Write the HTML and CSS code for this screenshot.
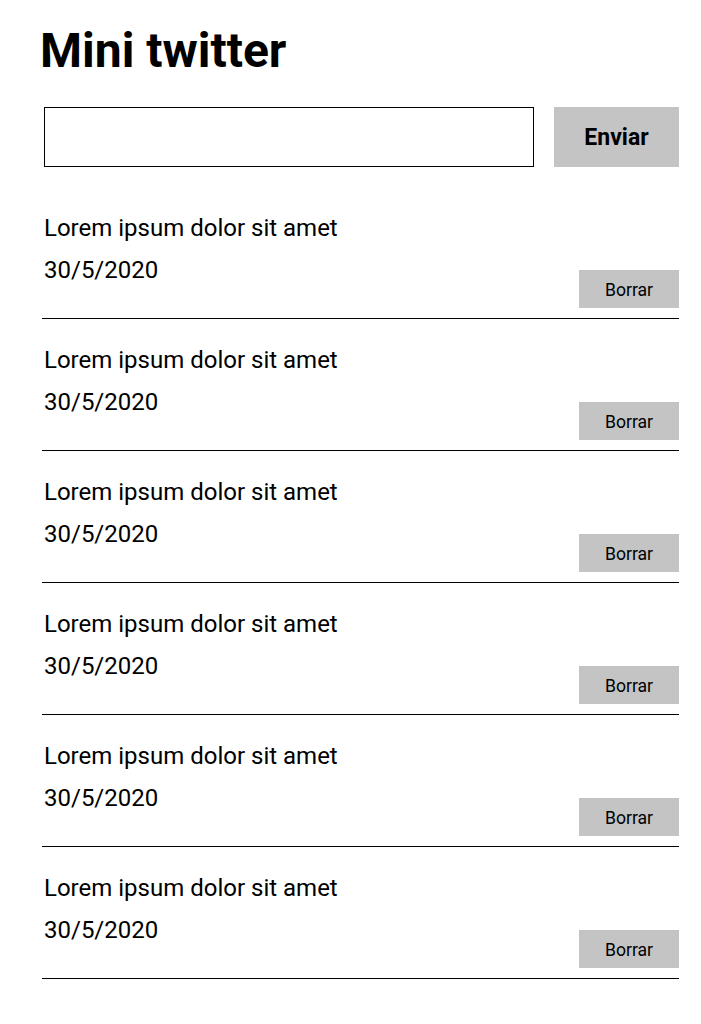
FILE: index.html
```html
<!DOCTYPE html>
<html lang="es">
<head>
<meta charset="utf-8">
<title>Mini twitter</title>
<link rel="stylesheet" href="styles.css">
</head>
<body>
<main class="app">
  <h1 class="title">Mini twitter</h1>
  <form class="composer">
    <input class="composer-input" type="text">
    <button class="composer-send" type="button">Enviar</button>
  </form>
  <ul class="tweets">
    <li class="tweet">
      <div class="tweet-body">
        <p class="tweet-text">Lorem ipsum dolor sit amet</p>
        <p class="tweet-date">30/5/2020</p>
      </div>
      <button class="tweet-delete" type="button">Borrar</button>
    </li>
    <li class="tweet">
      <div class="tweet-body">
        <p class="tweet-text">Lorem ipsum dolor sit amet</p>
        <p class="tweet-date">30/5/2020</p>
      </div>
      <button class="tweet-delete" type="button">Borrar</button>
    </li>
    <li class="tweet">
      <div class="tweet-body">
        <p class="tweet-text">Lorem ipsum dolor sit amet</p>
        <p class="tweet-date">30/5/2020</p>
      </div>
      <button class="tweet-delete" type="button">Borrar</button>
    </li>
    <li class="tweet">
      <div class="tweet-body">
        <p class="tweet-text">Lorem ipsum dolor sit amet</p>
        <p class="tweet-date">30/5/2020</p>
      </div>
      <button class="tweet-delete" type="button">Borrar</button>
    </li>
    <li class="tweet">
      <div class="tweet-body">
        <p class="tweet-text">Lorem ipsum dolor sit amet</p>
        <p class="tweet-date">30/5/2020</p>
      </div>
      <button class="tweet-delete" type="button">Borrar</button>
    </li>
    <li class="tweet">
      <div class="tweet-body">
        <p class="tweet-text">Lorem ipsum dolor sit amet</p>
        <p class="tweet-date">30/5/2020</p>
      </div>
      <button class="tweet-delete" type="button">Borrar</button>
    </li>
  </ul>
</main>
</body>
</html>
```
FILE: styles.css
```css
* { box-sizing: border-box; }

html, body {
  margin: 0;
  padding: 0;
  background: #ffffff;
}

body {
  font-family: Roboto, "Liberation Sans", sans-serif;
  color: #000000;
}

.app {
  padding: 0 22px 0 42px;
  display: flex;
  flex-direction: column;
}

.title {
  margin: 22px 0 28px -2px;
  font-size: 48px;
  line-height: 57px;
  font-weight: 700;
}

.composer {
  display: flex;
  gap: 20px;
  margin: 0 0 20px 2px;
  height: 60px;
}

.composer-input {
  flex: 1;
  height: 60px;
  border: 1px solid #000000;
  border-radius: 0;
  padding: 0 10px;
  font: inherit;
  font-size: 20px;
  outline: none;
}

.composer-send {
  width: 125px;
  height: 60px;
  border: none;
  border-radius: 0;
  background: #c4c4c4;
  font-family: inherit;
  font-size: 23px;
  font-weight: 700;
  color: #000000;
  padding: 0;
}

.tweets {
  list-style: none;
  margin: 0;
  padding: 0;
}

.tweet {
  display: flex;
  justify-content: space-between;
  align-items: flex-end;
  padding: 27px 0 10px 0;
  border-bottom: 1px solid #000000;
}

.tweet-body {
  display: flex;
  flex-direction: column;
  gap: 14px;
  padding-left: 2px;
  padding-bottom: 24px;
}

.tweet-text,
.tweet-date {
  margin: 0;
  font-size: 24px;
  line-height: 28px;
}

.tweet-delete {
  width: 100px;
  height: 38px;
  border: none;
  border-radius: 0;
  background: #c4c4c4;
  font-family: inherit;
  font-size: 17.6px;
  color: #000000;
  padding: 2px 0 0 0;
}
```
